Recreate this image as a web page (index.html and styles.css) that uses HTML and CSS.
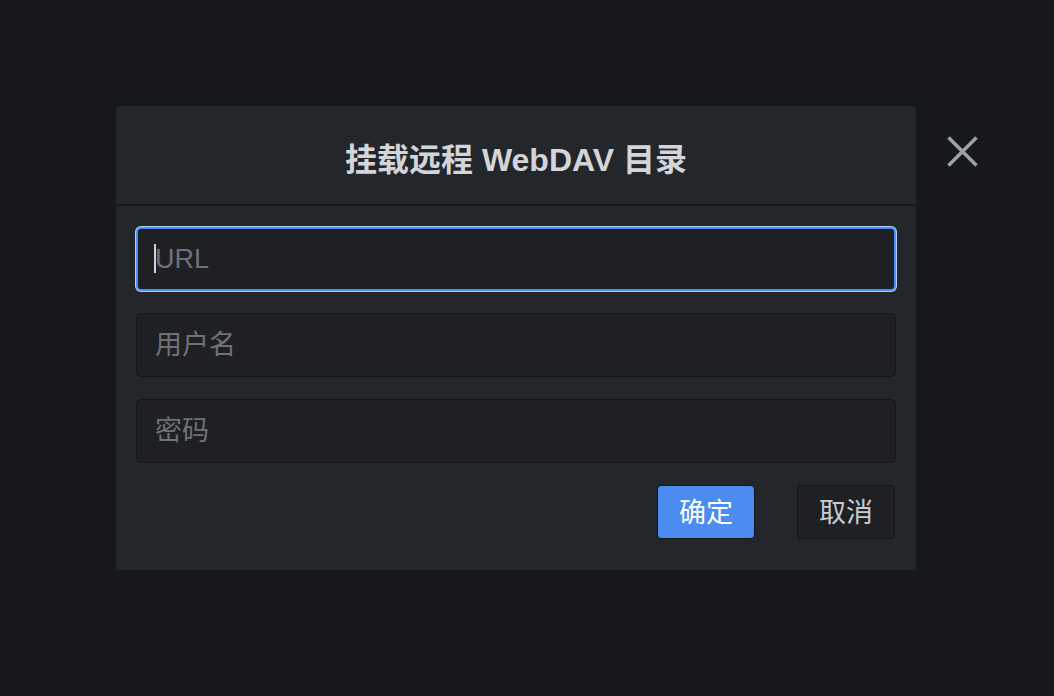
FILE: index.html
```html
<!DOCTYPE html>
<html lang="zh-CN">
<head>
<meta charset="utf-8">
<title>挂载远程 WebDAV 目录</title>
<link rel="stylesheet" href="styles.css">
</head>
<body>
<div class="stage">
  <div class="dialog">
    <div class="dialog-header">
      <h1 class="dialog-title">挂载远程 WebDAV 目录</h1>
    </div>
    <div class="dialog-body">
      <div class="field field-focused">
        <span class="caret"></span>
        <input class="input" type="text" placeholder="URL">
      </div>
      <div class="field">
        <input class="input" type="text" placeholder="用户名">
      </div>
      <div class="field">
        <input class="input" type="password" placeholder="密码">
      </div>
      <div class="actions">
        <button class="btn btn-primary">确定</button>
        <button class="btn btn-secondary">取消</button>
      </div>
    </div>
  </div>
  <button class="close" aria-label="关闭">
    <svg width="31" height="31" viewBox="0 0 31 31"><path d="M1.5 1.5 L29.5 29.5 M29.5 1.5 L1.5 29.5" stroke="#9ca1a6" stroke-width="3.6" stroke-linecap="butt" fill="none"/></svg>
  </button>
</div>
</body>
</html>
```
FILE: styles.css
```css
html, body {
  margin: 0;
  padding: 0;
  height: 100%;
}
body {
  background: #16181b;
  font-family: "Liberation Sans", "Noto Sans CJK SC", sans-serif;
  color: #d4d6d9;
}
.stage {
  display: flex;
  align-items: flex-start;
  padding: 106px 0 0 116px;
  gap: 31px;
}
.dialog {
  width: 800px;
  background: #23272c;
  border-radius: 4px;
  box-sizing: border-box;
}
.dialog-header {
  height: 98px;
  display: flex;
  align-items: center;
  justify-content: center;
  border-bottom: 2px solid #16181a;
}
.dialog-title {
  margin: 0;
  font-size: 32px;
  font-weight: bold;
  color: #d3d5d8;
  padding-top: 4px;
}
.dialog-body {
  padding: 21px 20px 31px 20px;
  display: flex;
  flex-direction: column;
  gap: 22px;
}
.field {
  position: relative;
  height: 64px;
}
.input {
  width: 100%;
  height: 100%;
  box-sizing: border-box;
  background: #1e2024;
  border: 1px solid #131517;
  border-radius: 5px;
  padding: 0 18px;
  font-family: "Liberation Sans", "Noto Sans CJK SC", sans-serif;
  font-size: 27px;
  color: #d4d6d9;
  outline: none;
}
.input::placeholder {
  color: #6e7277;
}
.field-focused .input {
  border: 2px solid #4a8df5;
  padding-left: 17px;
  box-shadow: 0 0 0 1px #b3d1f9;
}
.caret {
  position: absolute;
  left: 18px;
  top: 17px;
  width: 2px;
  height: 29px;
  background: #cfd2d6;
  pointer-events: none;
  z-index: 1;
}
.actions {
  display: flex;
  justify-content: flex-end;
  gap: 42px;
  padding-right: 1px;
}
.btn {
  width: 98px;
  height: 54px;
  border-radius: 4px;
  font-family: "Liberation Sans", "Noto Sans CJK SC", sans-serif;
  font-size: 27px;
  padding: 0 0 3px 0;
  cursor: pointer;
}
.btn-primary {
  background: #4a8cf0;
  border: 1px solid #111316;
  color: #ffffff;
}
.btn-secondary {
  background: #1e2024;
  border: 1px solid #131517;
  color: #c9ccd0;
}
.close {
  margin-top: 30px;
  width: 31px;
  height: 31px;
  padding: 0;
  background: none;
  border: none;
  cursor: pointer;
  display: flex;
}
```
